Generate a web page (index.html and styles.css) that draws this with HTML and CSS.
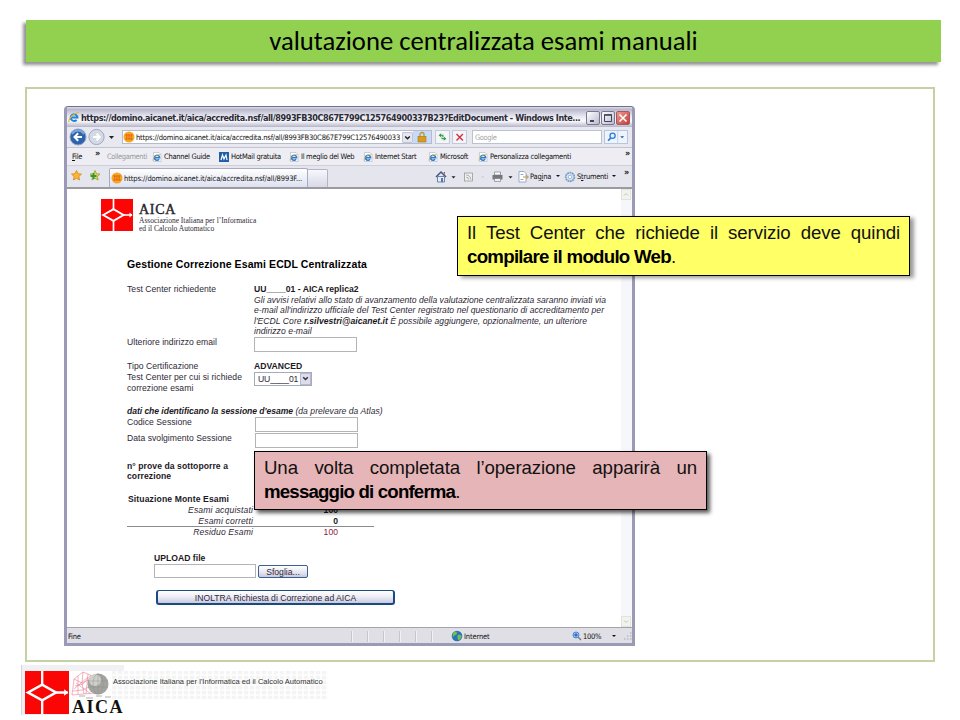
FILE: index.html
```
<!DOCTYPE html>
<html lang="it">
<head>
<meta charset="utf-8">
<title>valutazione centralizzata esami manuali</title>
<link rel="stylesheet" href="styles.css">
</head>
<body>
<svg width="0" height="0" class="defs" aria-hidden="true">
  <symbol id="ie" viewBox="0 0 10 10">
    <path d="M1.5.5h5.500l2 2v7h-7.500z" fill="#fff" stroke="#a9b4c8" stroke-width=".6"/>
    <path d="M2.300 5.700h5.300a2.600 2.500 0 1 0-.5 1.600" fill="none" stroke="#2b7bd0" stroke-width="1.500"/>
    <path d="M1 8.700C.3 6.500 5 2 8.600 2.400" fill="none" stroke="#e8b530" stroke-width=".8"/>
  </symbol>
  <symbol id="orb" viewBox="0 0 12 12">
    <circle cx="6" cy="6" r="5.500" fill="#f8a424"/>
    <path d="M3.800 3.300v5.400M6 3.300v5.400M8.200 3.300v5.400" stroke="#d9600f" stroke-width=".9" fill="none"/>
    <path d="M2 4h8M2 8h8" stroke="#d9600f" stroke-width=".6" fill="none"/>
  </symbol>
  <symbol id="aica" viewBox="0 0 32 32">
    <rect width="32" height="32" fill="#fb0505"/>
    <path d="M12.500 0v10.500M12.500 21.500V32M21.500 16H31" stroke="#fff" stroke-width="1.700" fill="none"/>
    <path d="M2.200 16l10.300-5.800L22.500 16l-10 5.800z" fill="#fb0505" stroke="#fff" stroke-width="1.900"/>
    <path d="M28.500 13.500l3 2.500-3 2.500z" fill="#fff"/>
  </symbol>
</svg>

<header class="banner"><h1>valutazione centralizzata esami manuali</h1></header>

<main class="panel">
  <section class="window">
    <div class="titlebar">
      <svg class="i11" viewBox="0 0 12 12"><path d="M3 6.600h6.500a3.400 3.300 0 1 0-.8 2.200" fill="none" stroke="#2385d8" stroke-width="2"/><path d="M1 11C0 8 6 1.500 11 1.500" fill="none" stroke="#e9b73a" stroke-width="1.200"/></svg>
      <span class="caption">https://domino.aicanet.it/aica/accredita.nsf/all/8993FB30C867E799C125764900337B23?EditDocument - Windows Inte...</span>
      <span class="wb">
        <i class="wbtn"><svg viewBox="0 0 12 12"><path d="M3 9h4" stroke="#33334d" stroke-width="1.800"/></svg></i>
        <i class="wbtn"><svg viewBox="0 0 12 12"><path d="M2.500 3h7v6.500h-7z" fill="none" stroke="#44445c" stroke-width="1"/><path d="M2 2.900h8" stroke="#44445c" stroke-width="1.500"/></svg></i>
        <i class="wbtn close"><svg viewBox="0 0 12 12"><path d="M2.500 2.500l7 7M9.500 2.500l-7 7" stroke="#fff" stroke-width="1.600"/></svg></i>
      </span>
    </div>

    <div class="address">
      <svg class="nav" viewBox="0 0 46 18">
        <circle cx="27.500" cy="9" r="7.600" fill="#d3dae6" stroke="#97a2b8" stroke-width=".9"/>
        <path d="M24 9h6M27.500 5.800L30.800 9l-3.300 3.200" fill="none" stroke="#fff" stroke-width="2"/>
        <circle cx="9" cy="9" r="8" fill="#2d62ae" stroke="#8ca2c8" stroke-width="1"/>
        <path d="M3 6a7 7 0 0 1 12 0" fill="none" stroke="#7ea5d8" stroke-width="2"/>
        <path d="M13 9H6M9.200 5.300L5.500 9l3.700 3.700" fill="none" stroke="#fff" stroke-width="2"/>
        <path d="M40 8h5l-2.500 3z" fill="#222"/>
      </svg>
      <div class="url"><svg class="i11"><use href="#orb"/></svg><span class="urltext">https://domino.aicanet.it/aica/accredita.nsf/all/8993FB30C867E799C12576490033</span><i class="drop"><svg viewBox="0 0 9 9"><path d="M2.200 3.500l2.300 2.300 2.300-2.300" fill="none" stroke="#222" stroke-width="1.500"/></svg></i><i class="lock"><svg viewBox="0 0 10 12"><path d="M3 6V3.500a2 2 0 0 1 4 0V6" fill="none" stroke="#b9973c" stroke-width="1.300"/><rect x="1" y="5.300" width="8" height="5.700" fill="#d99c18" stroke="#a97a1c" stroke-width=".6"/></svg></i></div>
      <i class="sq"><svg viewBox="0 0 14 14"><path d="M5.500 2.500L2.500 5l3 2.500zM8.500 6.500l3 2.500-3 2.500z" fill="#2c9a3c"/><path d="M5 5h2.500v2M9 9H6.500V7.500" fill="none" stroke="#2c9a3c" stroke-width="1.300"/></svg></i>
      <i class="sq"><svg viewBox="0 0 14 14"><path d="M3.500 3.500l7.500 7.500M11 3.500L3.500 11" stroke="#d2333b" stroke-width="1.600"/></svg></i>
      <div class="search">Google</div>
      <div class="go"><svg viewBox="0 0 24 14"><circle cx="8" cy="5.500" r="3" fill="#e3f0ff" stroke="#2f7ad8" stroke-width="1.500"/><path d="M6 8L2.800 11.200" stroke="#2f7ad8" stroke-width="1.900"/><path d="M14 0v14" stroke="#b8c3d6" stroke-width=".8"/><path d="M17 6h4.400l-2.200 2.500z" fill="#24548f"/></svg></div>
    </div>

    <div class="links">
      <span class="file"><u>F</u>ile</span><b class="chev">»</b>
      <span class="grey">Collegamenti</span>
      <svg class="i10"><use href="#ie"/></svg><span class="l1">Channel Guide</span>
      <svg class="i10" viewBox="0 0 10 10"><rect width="10" height="10" fill="#1f5fa8"/><path d="M2 8l1.500-5 1.500 4 2-4 1 5" stroke="#fff" stroke-width="1.200" fill="none"/></svg><span class="l2">HotMail gratuita</span>
      <svg class="i10"><use href="#ie"/></svg><span class="l3">Il meglio del Web</span>
      <svg class="i10"><use href="#ie"/></svg><span class="l4">Internet Start</span>
      <svg class="i10"><use href="#ie"/></svg><span class="l5">Microsoft</span>
      <svg class="i10"><use href="#ie"/></svg><span class="l6">Personalizza collegamenti</span>
      <b class="chev end">»</b>
    </div>

    <div class="tabs">
      <svg class="stars" viewBox="0 0 30 14"><path d="M5.500 1.500l1.500 3.200 3.500.4-2.600 2.400.7 3.500-3.100-1.700L2.400 11l.7-3.500L.5 5.100 4 4.700z" fill="#ffb52e" stroke="#c98010" stroke-width=".7"/><path d="M24 1.500l1.500 3.200 3.500.4-2.600 2.400.7 3.500-3.100-1.700-3.100 1.700.7-3.500L19 5.100l3.500-.4z" fill="#f6cb55" stroke="#7f9b2c" stroke-width=".7"/><path d="M22.500 4v6M19.500 7h6" stroke="#2d9b34" stroke-width="1.800"/></svg>
      <div class="tab"><svg class="i11"><use href="#orb"/></svg><span>https://domino.aicanet.it/aica/accredita.nsf/all/8993F...</span></div>
      <div class="newtab"></div>
      <div class="tools">
        <svg class="toolicons" viewBox="0 0 98 14">
          <path d="M1 7l5-5 5 5" fill="none" stroke="#42587f" stroke-width="1.500"/><path d="M2.500 6.500h7V12h-7z" fill="#e6edf7" stroke="#566b91" stroke-width=".8"/><path d="M6 8h2v4H6z" fill="#5176bb"/><path d="M8.500 2h1.500v3z" fill="#b34a3a"/>
          <path d="M16.500 6.200h4l-2 2.300z" fill="#222"/>
          <rect x="29.500" y="3" width="8" height="8" fill="#eee" stroke="#999" stroke-width=".8"/><path d="M31.300 5a4.500 4.500 0 0 1 4.500 4.500M31.300 7.200a2.300 2.300 0 0 1 2.300 2.300" fill="none" stroke="#999" stroke-width=".8"/>
          <path d="M46.500 6.500h2.500l-1.200 1.500z" fill="#bbb"/>
          <path d="M59.500 2h6v3h-6z" fill="#fff" stroke="#777" stroke-width=".7"/><path d="M57.500 5h10v4.500h-10z" fill="#73757f"/><path d="M59.500 8.500h6v3h-6z" fill="#eee" stroke="#777" stroke-width=".6"/>
          <path d="M73.500 6.200h4l-2 2.300z" fill="#222"/>
          <path d="M84 1.500h5l2 2V12h-7z" fill="#fff" stroke="#8190a8" stroke-width=".7"/><path d="M88 7h5M91 5l2.500 2L91 9" stroke="#b69b58" fill="none"/><path d="M85.500 4.500h3M85.500 9.500h3" stroke="#8faed6"/>
        </svg>
        <span class="pag">Pag<u>i</u>na</span><i class="tri"></i>
        <svg class="i11 gear" viewBox="0 0 12 12"><circle cx="6" cy="6" r="4.300" fill="#d8e7f6" stroke="#7f9fc4" stroke-width="1.800" stroke-dasharray="1.900 .5"/><circle cx="6" cy="6" r="1.800" fill="#fff" stroke="#7f9fc4" stroke-width=".7"/></svg>
        <span class="stru">S<u>t</u>rumenti</span><i class="tri"></i><b class="chev up">»</b>
      </div>
    </div>

    <div class="viewport">
      <div class="page">
        <div class="brand">
          <svg class="mark"><use href="#aica"/></svg>
          <div class="brandtext"><strong>AICA</strong><span>Associazione Italiana per l’Informatica</span><span>ed il Calcolo Automatico</span></div>
        </div>
        <form class="form">
          <h2>Gestione Correzione Esami ECDL Centralizzata</h2>
          <div class="row r-a"><label>Test Center richiedente</label>
            <div class="info"><b>UU____01 - AICA replica2</b><br><i>Gli avvisi relativi allo stato di avanzamento della valutazione centralizzata saranno inviati via<br><span class="w2">e-mail all'indirizzo ufficiale del Test Center registrato nel questionario di accreditamento per</span><br>l'ECDL Core <b>r.silvestri@aicanet.it</b> È possibile aggiungere, opzionalmente, un ulteriore<br>indirizzo e-mail</i></div></div>
          <div class="row r-b"><label>Ulteriore indirizzo email</label><span class="input"></span></div>
          <div class="row r-c"><label>Tipo Certificazione</label><b>ADVANCED</b></div>
          <div class="row r-d"><label class="wide">Test Center per cui si richiede<br>correzione esami</label><span class="select">UU____01<i><svg viewBox="0 0 9 9"><path d="M2.200 3.200l2.300 2.300 2.300-2.300" fill="none" stroke="#333" stroke-width="1.500"/></svg></i></span></div>
          <p class="r-e"><i><b>dati che identificano la sessione d'esame</b> (da prelevare da Atlas)</i></p>
          <div class="row r-f"><label>Codice Sessione</label><span class="input"></span></div>
          <div class="row r-g"><label>Data svolgimento Sessione</label><span class="input"></span></div>
          <p class="r-h"><b>n° prove da sottoporre a<br>correzione</b></p>
          <p class="r-i"><b>Situazione Monte Esami</b></p>
          <div class="sum"><i>Esami acquistati</i><b>100</b></div>
          <div class="sum"><i>Esami corretti</i><b>0</b></div>
          <div class="sum total"><i>Residuo Esami</i><span>100</span></div>
          <div class="upload">
            <b>UPLOAD file</b>
            <div class="pick"><span class="input"></span><span class="btn">Sfoglia...</span></div>
            <span class="submit">INOLTRA Richiesta di Correzione ad AICA</span>
          </div>
        </form>
      </div>
      <div class="scroll"><i><svg viewBox="0 0 9 9"><path d="M2 5.500l2.500-2 2.500 2" fill="none" stroke="#c4c4bc"/></svg></i><i><svg viewBox="0 0 9 9"><path d="M2 3.500l2.500 2 2.500-2" fill="none" stroke="#c4c4bc"/></svg></i></div>
    </div>

    <footer class="status">
      <span class="done">Fine</span>
      <i class="cell"></i><i class="cell"></i><i class="cell"></i><i class="cell"></i><i class="cell"></i><i class="cell"></i>
      <span class="zone"><svg class="i11" viewBox="0 0 12 12"><circle cx="6" cy="6" r="5.300" fill="#2c74b8"/><path d="M2 3c2-2 4-1 4 0s-1 2-2.500 2.500S2 8 1.500 7.500zM7 5c2-.5 4 .5 3.500 2S8.500 10.500 7.500 10 6 5.500 7 5z" fill="#6fc04c"/></svg>Internet</span>
      <span class="zoom"><svg class="i10" viewBox="0 0 10 10"><circle cx="4" cy="4" r="3" fill="#9cc4f4" stroke="#4c86d0"/><path d="M4 2.300v3.400M2.300 4h3.400" stroke="#1450b0"/><path d="M6.300 6.300L9 9" stroke="#7b7b83" stroke-width="1.500"/></svg>100%<i class="tri"></i></span>
      <svg class="grip" viewBox="0 0 9 9"><path d="M7 1h1.500M7 4h1.500M7 7h1.500M4 4h1.500M4 7h1.500M1 7h1.500" stroke="#b9b9c2" stroke-width="1.500"/></svg>
    </footer>
  </section>
</main>

<footer class="foot">
  <div class="footlogo">
    <svg class="footmark" viewBox="0 0 32 32" preserveAspectRatio="none"><use href="#aica"/></svg>
    <div class="footart">
      <svg class="globe" viewBox="0 0 53 29"><g fill="none" stroke="#ea7f95" stroke-width=".6"><path d="M1 24L3 8l9-7 12 5M1 24l22-2M3 8l8 4 13-6M4 15l8-2 8-9M2 20l10-1 8-5M12 1l-1 11 2 11M7 5v18M17 3l-2 20M5 12l15 11M3 18L17 6"/></g><circle cx="27" cy="13" r="10.500" fill="#a3a3a0"/><circle cx="24" cy="9" r="6" fill="#dadad6" opacity=".8"/><g fill="none" stroke="#8a8a8a" stroke-width=".4"><ellipse cx="27" cy="13" rx="5" ry="10"/><path d="M17 10h20M17 16h20M27 3v20"/></g><path d="M8 25h6M15 27h7M25 25h6M34 26h6" stroke="#999" stroke-width=".8"/></svg>
      <strong>AICA</strong>
    </div>
    <div class="strip">Associazione Italiana per l'Informatica ed il Calcolo Automatico</div>
  </div>
</footer>

<aside class="note yellow"><p>Il Test Center che richiede il servizio deve quindi</p><p class="last"><b>compilare il modulo Web</b>.</p></aside>
<aside class="note pink"><p>Una volta completata l’operazione apparirà un</p><p class="last"><b>messaggio di conferma</b>.</p></aside>
</body>
</html>
```
FILE: styles.css
```
* { box-sizing: border-box; }
body { margin: 0; width: 960px; height: 720px; overflow: hidden; position: relative; background: #fff; font-family: "Liberation Sans", Arial, sans-serif; color: #222; }
p, h1, h2 { margin: 0; font-weight: normal; }
svg { display: block; flex: none; }
.defs { position: absolute; }
.i10 { width: 10px; height: 10px; }
.i11 { width: 12px; height: 12px; }

.banner { margin: 20px 19px 0 26px; height: 42px; background: #92d050; box-shadow: -3px 3px 3px rgba(60, 60, 70, .55); }
.banner h1 { font: 26.67px/43px Carlito, "Noto Sans", sans-serif; text-align: center; color: #000; }

.panel { margin: 25px 0 0 25px; width: 910px; height: 575px; border: 2px solid #c5d0a5; padding: 17px 0 0 37px; }
.window { width: 571px; height: 540px; display: flex; flex-direction: column; background: #e5e5ee; border: solid #9a9ab6; border-width: 1px 3px 3px 3px; border-top-color: #70708e; border-radius: 4px 4px 0 0; font-family: "DejaVu Sans Condensed", sans-serif; font-size: 7.5px; letter-spacing: -.28px; color: #111; white-space: nowrap; }

.titlebar { height: 20px; display: flex; align-items: center; padding-left: 1px; background: linear-gradient(#dedeeb 0, #b8b8cc 12%, #e6e6ef 45%, #fbfbfd 70%, #b4b4c8 100%); }
.caption { width: 502px; margin-left: 1px; font-weight: bold; font-size: 9px; letter-spacing: -.415px; color: #2a2a36; padding-top: 1px; }
.wb { display: flex; gap: 1px; margin-left: 3px; padding-top: 1px; }
.wbtn { width: 14px; height: 14px; border: 1px solid #77778f; border-radius: 2px; background: linear-gradient(135deg, #fff, #b9b9cf); }
.wbtn svg { width: 12px; height: 12px; }
.wbtn.close { background: linear-gradient(135deg, #ee9a8d, #c33c3c); border-color: #a8585c; }

.address { height: 21px; display: flex; align-items: center; background: #e8e8f0; border-bottom: 1px solid #c3c3d0; padding-left: 2px; }
.nav { width: 46px; height: 18px; }
.url { width: 310px; height: 14px; margin-left: 7px; display: flex; align-items: center; border: 1px solid #b3bccb; background: #fff; }
.urltext { width: 266px; margin-left: 1px; letter-spacing: -.186px; }
.drop { width: 11px; height: 11px; border: 1px solid #c3c3d3; background: #e6e6f0; border-radius: 1px; }
.drop svg { width: 9px; height: 9px; }
.lock { flex: 1; height: 12px; background: #c6dafa; display: flex; justify-content: center; }
.lock svg { width: 10px; height: 12px; }
.sq { width: 15px; height: 14px; margin-left: 3px; border: 1px solid #c2cad8; background: #f3f5fa; }
.sq + .sq { margin-left: 2px; }
.sq svg { width: 13px; height: 12px; }
.search { width: 130px; height: 14px; margin-left: 5px; border: 1px solid #b9c2d0; background: #fff; padding-left: 2px; line-height: 13px; color: #a5a5a5; letter-spacing: -.4px; }
.go { width: 24px; height: 14px; margin-left: 2px; border: 1px solid #b9c6da; background: #eef4fd; }
.go svg { width: 22px; height: 12px; }

.links { height: 18px; display: flex; align-items: center; border-bottom: 1px solid #cfcfda; background: #ededf3; padding-left: 5px; }
.file { width: 23px; }
.chev { font-size: 9px; align-self: flex-start; line-height: 11px; }
.chev.end { margin-left: auto; margin-right: 2px; }
.grey { width: 45px; margin-left: 7px; color: #999; letter-spacing: -.39px; }
.links .i10 + span { margin-left: 2px; }
.l1 { width: 55px; }
.l2 { width: 58px; }
.l3 { width: 62px; }
.l4 { width: 53px; }
.l5 { width: 38px; }
.l6 { width: 83px; letter-spacing: -.26px; }

.tabs { height: 21px; display: flex; align-items: flex-end; background: #e5e5ee; padding-left: 4px; }
.stars { width: 30px; height: 14px; margin-bottom: 4px; }
.tab { width: 199px; height: 19px; margin-left: 8px; display: flex; align-items: center; padding: 0 0 0 1px; border: 1px solid #a8abc4; border-bottom: 0; border-radius: 2px 2px 0 0; background: linear-gradient(#fff, #dde0f0); letter-spacing: -.1px; }
.tab .i11 { margin-right: 1px; }
.newtab { width: 20px; height: 18px; border: 1px solid #b4b4c8; border-left: 0; border-bottom: 0; border-radius: 0 2px 0 0; background: linear-gradient(#f7f7fc, #d8d8e8); }
.tools { height: 21px; flex: 1; display: flex; align-items: center; padding-left: 107px; }
.toolicons { width: 98px; height: 14px; margin: 0 -3px 0 0; }
.pag { width: 23px; letter-spacing: -.2px; }
.tri { margin-left: 3px; border: 2px solid transparent; border-top: 2.500px solid #111; border-bottom: 0; width: 4px; height: 2.500px; }
.gear { margin-left: 4px; }
.stru { width: 32px; margin-left: 1px; }
.chev.up { margin: 0 0 0 8px; line-height: 12px; }

.viewport { height: 440px; display: flex; border-top: 2px solid #9a9aa0; background: #fff; font: 8.6px/10.6px "Liberation Sans", Arial, sans-serif; letter-spacing: .027px; color: #2e2836; }
.page { width: 554px; padding-top: 10px; }
.brand { height: 34px; margin-left: 34px; display: flex; font-family: "Liberation Serif", serif; }
.mark { width: 32px; height: 32px; }
.brandtext { margin-left: 6px; display: flex; flex-direction: column; font-size: 7.500px; line-height: 7.500px; letter-spacing: 0; padding-top: 4px; }
.brandtext strong { font-size: 14px; line-height: 14px; letter-spacing: .7px; font-weight: normal; -webkit-text-stroke: .4px #222; }
.form { margin: 22px 0 0 60px; }
.form h2 { height: 29px; font-weight: bold; font-size: 10.5px; line-height: 18px; letter-spacing: .1px; color: #000; }
.form b { color: #1c1824; }
.row { display: flex; }
.row label { width: 127px; }
.row label.wide { letter-spacing: .058px; }
.info { line-height: 10.500px; letter-spacing: .024px; }
.w2 { letter-spacing: .045px; }
.r-a { height: 53px; }
.r-b { height: 24px; }
.r-c { height: 11px; line-height: 11px; }
.r-d { height: 33.500px; line-height: 11px; }
.r-e { height: 11px; }
.r-e b { letter-spacing: -.055px; }
.r-f { height: 16px; }
.r-f .input, .r-g .input { margin-left: 1px; }
.r-g { height: 28px; }
.r-h { height: 33.500px; letter-spacing: .066px; }
.r-i { height: 11px; letter-spacing: .12px; padding-left: 1px; }
.input { display: block; width: 103px; height: 15px; border: 1px solid #b3b3b8; background: #fff; }
.select { width: 58px; height: 14px; border: 1px solid #a5acb9; display: flex; align-items: center; justify-content: space-between; padding-left: 3px; letter-spacing: -.1px; }
.select i { width: 11px; height: 12px; border: 1px solid #b5b8d0; background: #dcdcea; }
.select svg { width: 9px; height: 9px; }
.sum { width: 247px; height: 10.700px; padding-right: 36px; display: flex; }
.sum i { width: 126px; text-align: right; letter-spacing: .15px; }
.sum b, .sum span { margin-left: auto; }
.sum.total { border-top: 1px solid #8c8c90; height: 26px; }
.sum.total span { color: #8e1c3c; }
.upload { margin-left: 27px; display: flex; flex-direction: column; }
.upload > b { height: 12px; padding-top: 1px; }
.pick { display: flex; gap: 2px; height: 26px; }
.pick .input { width: 102px; height: 14px; }
.btn { width: 50px; height: 13px; margin-top: .5px; border: 1px solid #3a5f90; border-radius: 2px; background: linear-gradient(#fff, #e4e4f0 60%, #c8c8de); text-align: center; line-height: 12px; }
.submit { width: 239px; height: 15px; margin-left: 2px; border: 2px solid #1b4a80; border-top-width: 1px; border-radius: 3px; background: linear-gradient(#fff, #ececf5 50%, #c9c9df); text-align: center; line-height: 14px; letter-spacing: 0; }
.scroll { width: 11px; background: #f7f6fa; display: flex; flex-direction: column; justify-content: space-between; }
.scroll i { width: 10px; height: 11px; border: 1px solid #e2e2dc; background: #f3f3ee; }
.scroll svg { width: 8px; height: 9px; }

.status { height: 16px; display: flex; align-items: center; background: #dfdfe5; border-top: 1px solid #a3a3ad; padding-top: 1px; }
.done { width: 284px; padding-left: 1px; }
.cell { width: 16px; height: 11px; border-left: 1px solid #c6c6cc; box-shadow: inset 1px 0 #f2f2f5; }
.zone { display: flex; align-items: center; gap: 1px; width: 110px; margin-left: 4px; letter-spacing: -.15px; }
.zoom { display: flex; align-items: center; gap: 1px; letter-spacing: -.3px; margin-left: 11px; }
.zoom .tri { margin-left: 10px; }
.grip { width: 9px; height: 9px; margin-left: auto; }

.foot { margin: 3px 0 0 21px; }
.footlogo { display: flex; width: 310px; height: 50px; border-left: 1px solid #d5d5d8; background: linear-gradient(90deg, #f1f1f3 102px, transparent 102px); padding-left: 3px; }
.footmark { width: 44px; height: 43px; margin-top: 6px; }
.footart { width: 55px; padding-left: 2px; background: #fff; margin-top: 6px; height: 44px; }
.globe { width: 53px; height: 29px; }
.footart strong { display: block; font: bold 18px/14px "Liberation Serif", serif; letter-spacing: 1.5px; color: #111; padding-left: 1px; }
.strip { width: 216px; height: 28px; margin: 6px 0 0 -12px; padding: 1px 0 0 1px; font-size: 7.500px; line-height: 19px; letter-spacing: .028px; white-space: nowrap; color: #333; background: repeating-linear-gradient(90deg, transparent 0 4px, rgba(255, 255, 255, .8) 4px 6px), repeating-linear-gradient(#f4f4f4 0 3px, #fbfbfb 3px 5px); }

.note { position: absolute; border: 1px solid #000; padding: 4px 9px 0; font-size: 18.670px; line-height: 24px; color: #111; }
.note p { text-align: justify; text-align-last: justify; letter-spacing: -.1px; }
.note .last { text-align-last: left; }
.note b { letter-spacing: -.72px; color: #000; }
.yellow { left: 457px; top: 216px; width: 453px; height: 60px; background: #ffff66; box-shadow: 4px 2px 4px rgba(0, 0, 0, .4); }
.pink { left: 254px; top: 451px; width: 453px; height: 59px; background: #e6b5b7; box-shadow: 3px 3px 4px rgba(0, 0, 0, .65); }
.pink b { letter-spacing: -.82px; }
```
